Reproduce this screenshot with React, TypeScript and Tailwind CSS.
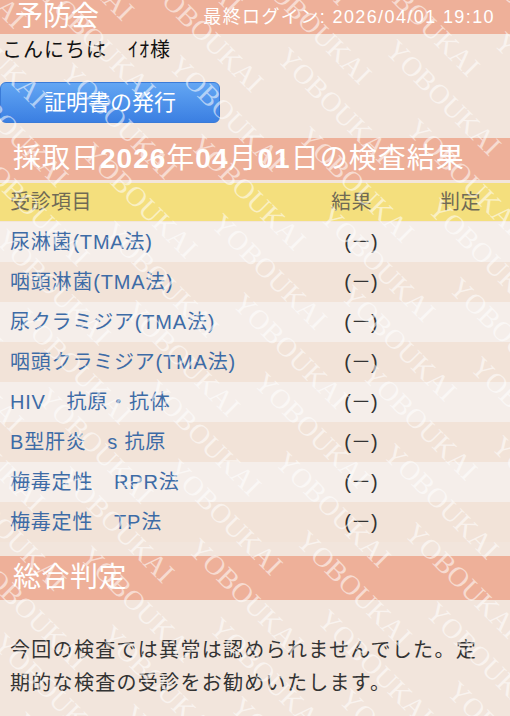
import React from 'react';

const FONT = '"Liberation Sans", "Noto Sans CJK JP", sans-serif';

const rows = [
  '尿淋菌(TMA法)',
  '咽頭淋菌(TMA法)',
  '尿クラミジア(TMA法)',
  '咽頭クラミジア(TMA法)',
  'HIV　抗原・抗体',
  'B型肝炎　s 抗原',
  '梅毒定性　RPR法',
  '梅毒定性　TP法',
];

// diagonal "YOBOUKAI" stamp: lines 41px apart, each shifted 71px along the line
const marks: { u: number; v: number }[] = [];
for (let k = -6; k <= 17; k++) {
  const base = (((237 + 71 * k) % 213) + 213) % 213;
  for (let j = -1; j <= 4; j++) {
    marks.push({ u: base + 213 * j, v: -153 + 41 * k });
  }
}

const Watermark: React.FC = () => (
  <svg className="pointer-events-none absolute inset-0 h-full w-full" aria-hidden="true">
    <g transform="rotate(45)" opacity="0.55" fill="#ffffff" fontFamily="'Liberation Serif', serif" fontSize="28">
      {marks.map((m, i) => (
        <text key={i} x={m.u} y={m.v}>
          YOBOUKAI
        </text>
      ))}
    </g>
  </svg>
);

export default function App() {
  return (
    <div className="relative min-h-[716px] w-[510px] overflow-hidden bg-[#f2e5dc]" style={{ fontFamily: FONT }}>
      {/* header */}
      <div className="flex h-[34px] items-center justify-between bg-[#eeb099] pl-[15px] pr-[15px] text-white">
        <span className="text-[28px] leading-none">予防会</span>
        <span className="text-[18px] leading-none tracking-[1.4px]">最終ログイン: 2026/04/01 19:10</span>
      </div>

      <p className="mt-[4px] pl-[2px] text-[20px] leading-[24px] tracking-[1px] text-[#111]">こんにちは　ｲｵ様</p>

      <button className="mt-[20px] flex h-[41px] w-[220px] items-center justify-center rounded-[6px] border border-[#3a7bd8] bg-gradient-to-b from-[#63a6f3] to-[#3b7fe2] text-[22px] text-white">
        証明書の発行
      </button>

      {/* results */}
      <div className="mt-[15px] flex h-[42px] items-center bg-[#eeb099] pl-[13px] text-[28px] leading-none tracking-[1px] text-white">
        採取日<b>2026</b>年<b>04</b>月<b>01</b>日の検査結果
      </div>
      <div className="mt-[3px] flex h-[38px] items-center bg-[#f4df7d] text-[20px] tracking-[0.5px] text-[#706a55]">
        <span className="w-[320px] pl-[10px]">受診項目</span>
        <span className="w-[120px] pl-[11px]">結果</span>
        <span>判定</span>
      </div>
      <div className="mt-[1px]">
        {rows.map((name, i) => (
          <div
            key={name}
            className={`flex h-[40px] items-center text-[20px] ${i % 2 === 0 ? 'bg-[#f5eeea]' : 'bg-[#f2e3d8]'}`}
          >
            <span className="w-[310px] pl-[10px] tracking-[0.8px] text-[#3d6ba6]">{name}</span>
            <span className="w-[102px] text-center text-[#333]">(－)</span>
          </div>
        ))}
      </div>

      {/* summary */}
      <div className="mt-[14px] flex h-[44px] items-center bg-[#eeb099] pl-[13px] text-[28px] leading-none tracking-[0.5px] text-white">
        総合判定
      </div>
      <p className="mt-[34px] pl-[10px] pr-[20px] text-[20px] leading-[33px] tracking-[1.3px] text-[#333]">
        今回の検査では異常は認められませんでした。定期的な検査の受診をお勧めいたします。
      </p>

      <Watermark />
    </div>
  );
}
